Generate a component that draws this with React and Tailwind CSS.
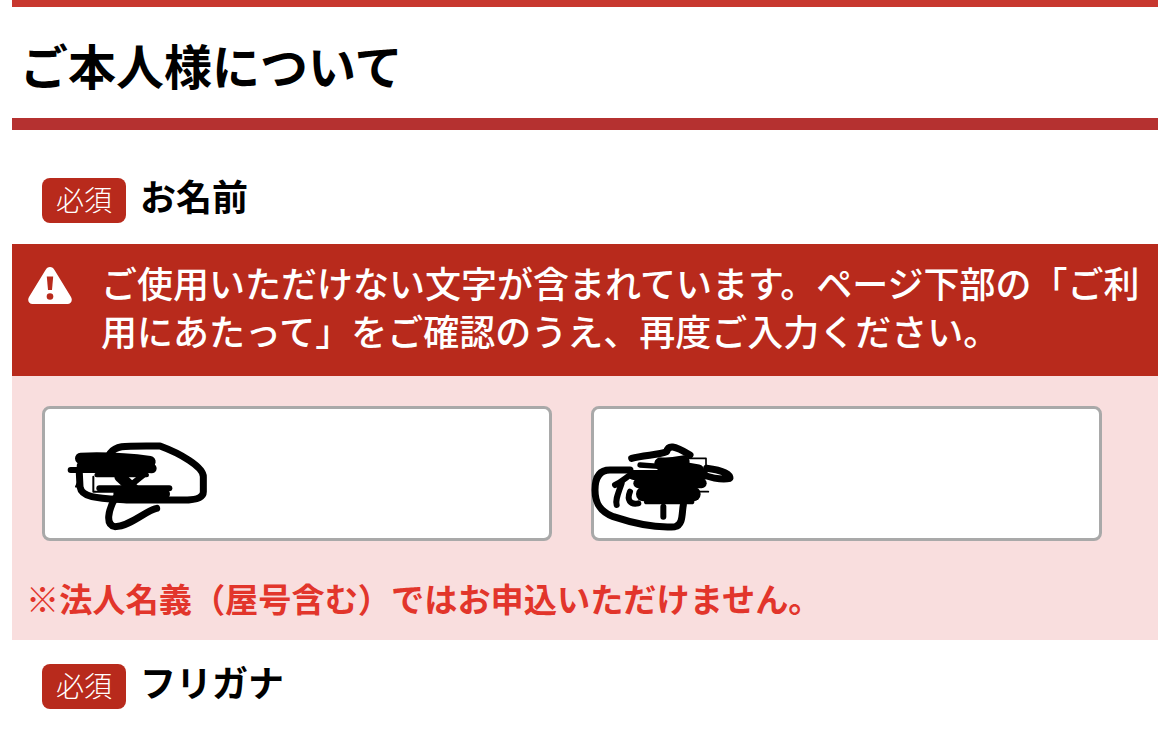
function Required({ children }) {
  return (
    <div className="flex h-[45px] items-center pl-[30px]">
      <span className="flex h-[45px] w-[84px] items-center justify-center rounded-lg bg-[#b82a1c] pb-[4px] text-[28px] font-light text-white">
        必須
      </span>
      <span className="mb-[12px] ml-[14px] text-[36px] font-bold leading-none text-black">
        {children}
      </span>
    </div>
  );
}

// viewBox is 3x, the strokes were traced from a zoomed crop
function Scribble({ paths, className }) {
  return (
    <svg className={className} width="200" height="130" viewBox="0 0 600 390" fill="none" stroke="black" strokeLinecap="round" strokeLinejoin="round">
      {paths.map((p, i) => (
        <path key={i} d={p.d} strokeWidth={p.w} />
      ))}
    </svg>
  );
}

const leftScribble = [
  { d: "M210 100C230 75 250 78 360 78C420 100 490 140 490 170V215C490 235 460 240 430 240H260C180 235 125 235 120 200L118 160", w: 21 },
  { d: "M350 265C320 270 270 320 225 320C195 315 205 270 225 235", w: 21 },
  { d: "M122 115C200 112 280 118 330 125", w: 34 },
  { d: "M125 138C200 135 280 140 335 145", w: 30 },
  { d: "M92 150H330", w: 18 },
  { d: "M170 165H320", w: 14 },
  { d: "M240 170L285 212", w: 34 },
  { d: "M310 165L260 205", w: 18 },
  { d: "M178 205H388", w: 18 },
  { d: "M235 222H375", w: 30 },
  { d: "M240 240L350 230", w: 14 },
  { d: "M160 170V215H232", w: 6 },
  { d: "M108 200L122 170", w: 6 },
];

const rightScribble = [
  { d: "M150 150H90C60 150 45 170 45 210C45 250 60 275 100 290C160 310 220 325 285 320C310 315 305 280 310 255", w: 21 },
  { d: "M155 115C190 105 240 105 260 95C265 75 280 75 330 105", w: 21 },
  { d: "M380 145C420 150 450 160 450 175C430 180 400 175 370 165", w: 21 },
  { d: "M105 195C125 185 135 175 150 165", w: 18 },
  { d: "M125 190C115 220 105 240 110 255", w: 18 },
  { d: "M150 215C140 240 150 255 175 250", w: 18 },
  { d: "M240 130L355 150", w: 34 },
  { d: "M180 135L250 140", w: 16 },
  { d: "M245 135L310 125", w: 38 },
  { d: "M160 165H370", w: 30 },
  { d: "M175 190H365", w: 30 },
  { d: "M190 222H340", w: 44 },
  { d: "M200 245H335", w: 16 },
  { d: "M250 260V290", w: 18 },
  { d: "M235 115H378V170", w: 5 },
  { d: "M330 215H385", w: 5 },
];

export default function App() {
  return (
    <div className="h-[742px] w-[1170px] overflow-hidden bg-white font-['Noto_Sans_CJK_JP','Noto_Sans_CJK_SC',sans-serif]">
      <div className="mx-3 h-[7px] border-b-[7px] border-[#c8382f]" />

      <div className="mx-3 flex h-[123px] items-center border-b-[12px] border-[#b53130] pl-[8px] pt-[2px]">
        <h1 className="text-[48px] font-bold leading-none text-black">ご本人様について</h1>
      </div>

      <div className="pl-3 pt-[48px]">
        <Required>お名前</Required>
      </div>

      <div className="mx-3 mt-[21px]">
        <div className="flex h-[132px] bg-[#b82a1c] pl-[16px] pt-[14px]">
          <svg className="mt-[9px] shrink-0" width="44" height="37" viewBox="0 0 44 37">
            <path d="M22 0C20 0 18.500 1 17.500 3L1 30C-1 33.500 1 37 4.500 37H39.500C43 37 45 33.500 43 30L26.500 3C25.500 1 24 0 22 0Z" fill="white" />
            <path d="M18.800 9.500H25.200L24 23H20Z" fill="#b82a1c" />
            <circle cx="22" cy="29.500" r="3.300" fill="#b82a1c" />
          </svg>
          <p className="ml-[29px] w-[1050px] text-[36px] font-medium leading-[48px] text-white">
            ご使用いただけない文字が含まれています。ページ下部の「ご利用にあたって」をご確認のうえ、再度ご入力ください。
          </p>
        </div>

        <div className="h-[264px] bg-[#f9dede] pl-[30px] pt-[30px]">
          <div className="flex gap-[39px]">
            <div className="h-[135px] w-[510px] rounded-lg border-[3px] border-[#a9a9a9] bg-white">
              <Scribble paths={leftScribble} className="ml-[-5px] mt-[11px]" />
            </div>
            <div className="h-[135px] w-[511px] rounded-lg border-[3px] border-[#a9a9a9] bg-white">
              <Scribble paths={rightScribble} className="ml-[-14px] mt-[11px]" />
            </div>
          </div>
          <p className="-ml-[16px] mt-[34px] text-[33.200px] font-bold leading-[46px] text-[#e2352b]">
            ※法人名義（屋号含む）ではお申込いただけません。
          </p>
        </div>
      </div>

      <div className="pl-3 pt-[24px]">
        <Required>フリガナ</Required>
      </div>
    </div>
  );
}
